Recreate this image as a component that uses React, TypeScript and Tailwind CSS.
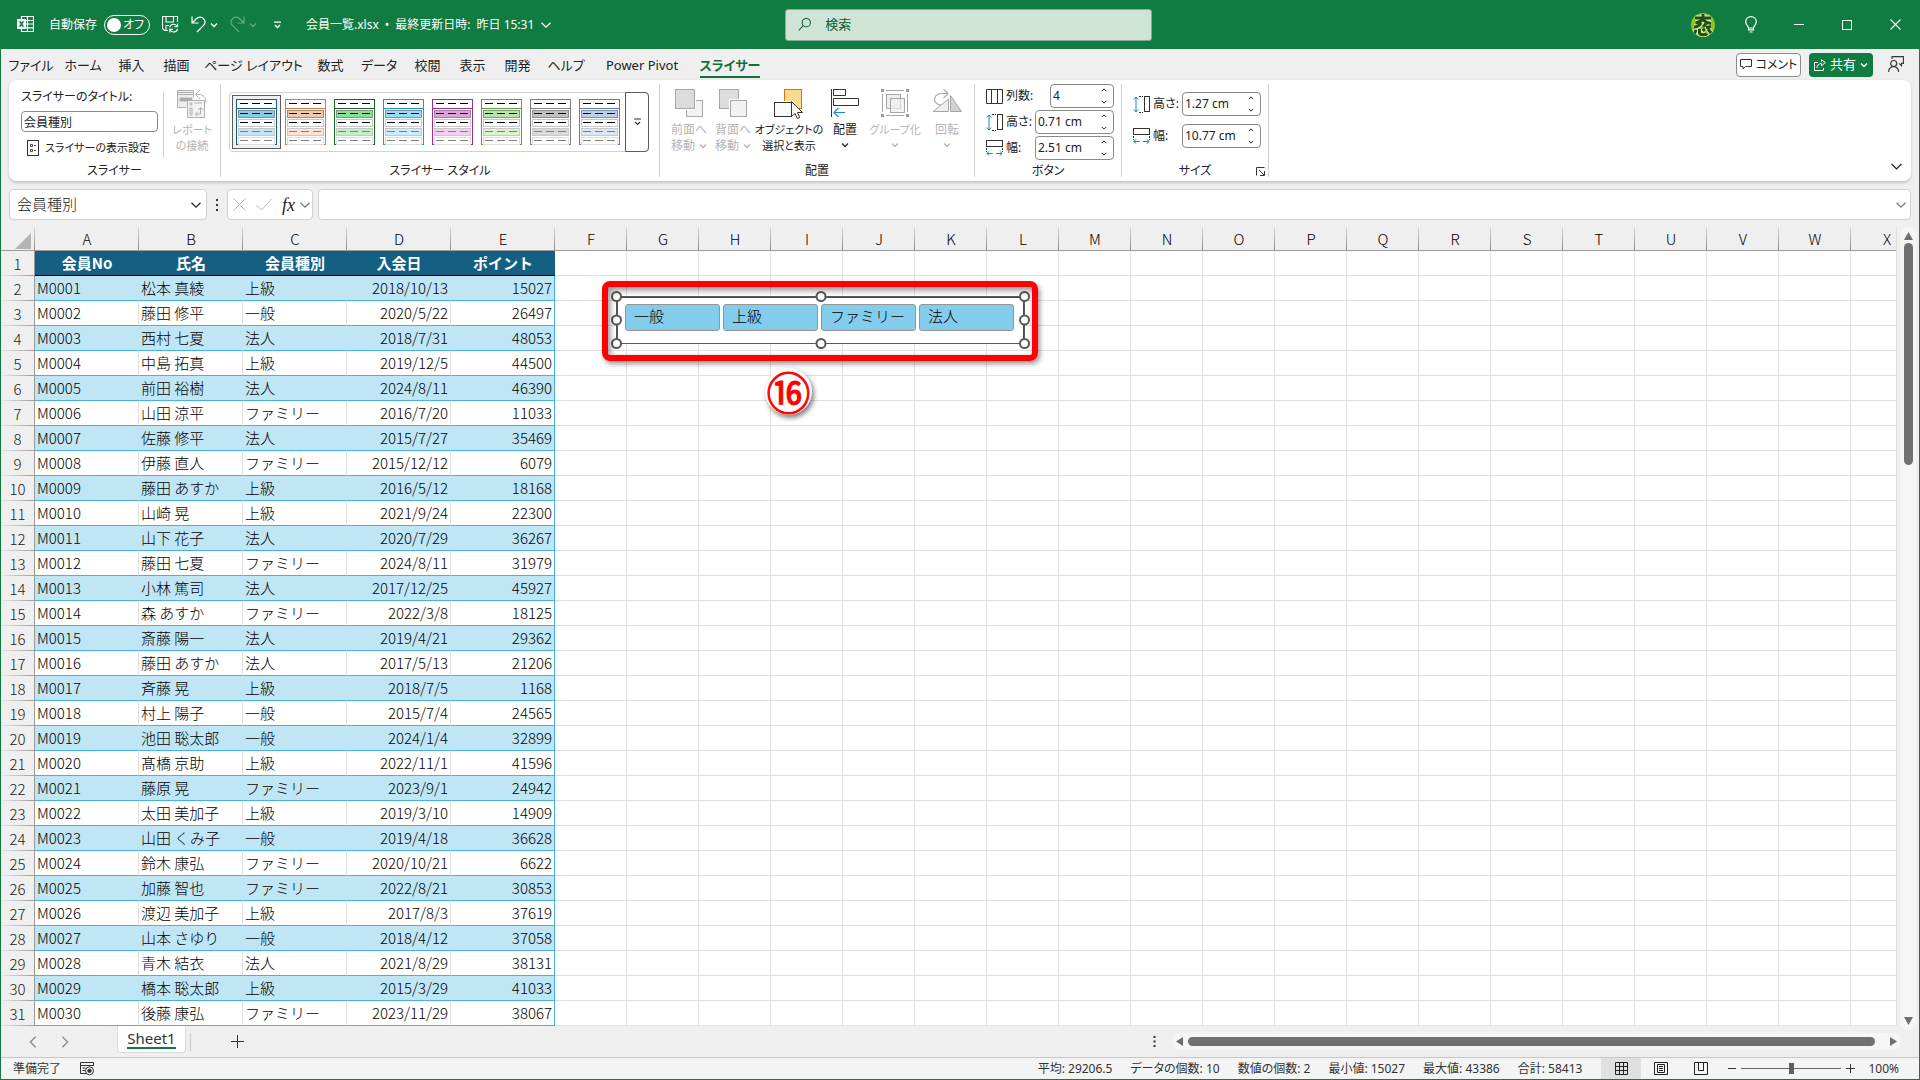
import type { ReactNode } from "react";
import { clsx } from "clsx";

type Member = [string, string, string, string, string];

const MEMBERS: Member[] = [
  ["M0001", "松本 真綾", "上級", "2018/10/13", "15027"],
  ["M0002", "藤田 修平", "一般", "2020/5/22", "26497"],
  ["M0003", "西村 七夏", "法人", "2018/7/31", "48053"],
  ["M0004", "中島 拓真", "上級", "2019/12/5", "44500"],
  ["M0005", "前田 裕樹", "法人", "2024/8/11", "46390"],
  ["M0006", "山田 涼平", "ファミリー", "2016/7/20", "11033"],
  ["M0007", "佐藤 修平", "法人", "2015/7/27", "35469"],
  ["M0008", "伊藤 直人", "ファミリー", "2015/12/12", "6079"],
  ["M0009", "藤田 あすか", "上級", "2016/5/12", "18168"],
  ["M0010", "山崎 晃", "上級", "2021/9/24", "22300"],
  ["M0011", "山下 花子", "法人", "2020/7/29", "36267"],
  ["M0012", "藤田 七夏", "ファミリー", "2024/8/11", "31979"],
  ["M0013", "小林 篤司", "法人", "2017/12/25", "45927"],
  ["M0014", "森 あすか", "ファミリー", "2022/3/8", "18125"],
  ["M0015", "斎藤 陽一", "法人", "2019/4/21", "29362"],
  ["M0016", "藤田 あすか", "法人", "2017/5/13", "21206"],
  ["M0017", "斉藤 晃", "上級", "2018/7/5", "1168"],
  ["M0018", "村上 陽子", "一般", "2015/7/4", "24565"],
  ["M0019", "池田 聡太郎", "一般", "2024/1/4", "32899"],
  ["M0020", "髙橋 京助", "上級", "2022/11/1", "41596"],
  ["M0021", "藤原 晃", "ファミリー", "2023/9/1", "24942"],
  ["M0022", "太田 美加子", "上級", "2019/3/10", "14909"],
  ["M0023", "山田 くみ子", "一般", "2019/4/18", "36628"],
  ["M0024", "鈴木 康弘", "ファミリー", "2020/10/21", "6622"],
  ["M0025", "加藤 智也", "ファミリー", "2022/8/21", "30853"],
  ["M0026", "渡辺 美加子", "上級", "2017/8/3", "37619"],
  ["M0027", "山本 さゆり", "一般", "2018/4/12", "37058"],
  ["M0028", "青木 結衣", "法人", "2021/8/29", "38131"],
  ["M0029", "橋本 聡太郎", "上級", "2015/3/29", "41033"],
  ["M0030", "後藤 康弘", "ファミリー", "2023/11/29", "38067"],
];

const HEADERS = ["会員No", "氏名", "会員種別", "入会日", "ポイント"];
const DATA_COLS = ["A", "B", "C", "D", "E"];
const EMPTY_COLS = "FGHIJKLMNOPQRSTUVWX".split("");

const TABS = [
  { label: "ファイル", width: "w-[52px]" },
  { label: "ホーム", width: "w-[52px]" },
  { label: "挿入", width: "w-[45px]" },
  { label: "描画", width: "w-[45px]" },
  { label: "ページ レイアウト", width: "w-[109px]" },
  { label: "数式", width: "w-[45px]" },
  { label: "データ", width: "w-[52px]" },
  { label: "校閲", width: "w-[45px]" },
  { label: "表示", width: "w-[45px]" },
  { label: "開発", width: "w-[45px]" },
  { label: "ヘルプ", width: "w-[52px]" },
  { label: "Power Pivot", width: "w-[100px]" },
  { label: "スライサー", width: "w-[76px]" },
];

const STYLES = [
  { name: "青緑", line: "#156082", strong: "#83cceb", soft: "#c0e6f5" },
  { name: "オレンジ", line: "#e97132", strong: "#f7c7ac", soft: "#fbe2d5" },
  { name: "緑", line: "#196b24", strong: "#84e291", soft: "#c1f0c8" },
  { name: "水色", line: "#0f9ed5", strong: "#94dcf8", soft: "#caedfb" },
  { name: "紫", line: "#a02b93", strong: "#e49edd", soft: "#f2ceef" },
  { name: "黄緑", line: "#4ea72e", strong: "#b5e6a2", soft: "#daf2d0" },
  { name: "灰色", line: "#7f7f7f", strong: "#bfbfbf", soft: "#d9d9d9" },
  { name: "青", line: "#4f81bd", strong: "#b8d0ea", soft: "#dce6f5" },
];

const STATS = ["平均: 29206.5", "データの個数: 10", "数値の個数: 2", "最小値: 15027", "最大値: 43386", "合計: 58413"];

function Chevron({ size = 8, className }: { size?: number; className?: string }) {
  return (
    <svg width={size} height={size} viewBox="0 0 8 8" fill="none" stroke="currentColor" strokeWidth={size > 8 ? 0.8 : 1.3} className={className}>
      <path d="M1 2.5 4 5.5 7 2.5" />
    </svg>
  );
}

/* ---------- title bar ---------- */

function ExcelIcon() {
  return (
    <svg width="17" height="17" viewBox="0 0 17 17" fill="none" stroke="white">
      <path d="M4.5 3V.5h12v15h-12V13M10.5.5v15M4.5 4.5h12M9 8h7.5M4.5 11.8h12" strokeWidth="1.2" />
      <path d="M0 3h9v10H0z" fill="white" stroke="none" />
      <path d="m2.6 5.3 3.8 5.4M6.4 5.3l-3.8 5.4" stroke="#107c41" strokeWidth="1.5" />
    </svg>
  );
}

function TitleBar() {
  return (
    <header className="grid h-[49px] shrink-0 grid-cols-[minmax(0,1fr)_367px_minmax(0,1fr)] items-center bg-[#107c41] pl-4 text-xs text-white">
      <div className="flex items-center">
        <ExcelIcon />
        <label className="ml-[15px] flex items-center gap-[7px]">
          自動保存
          <input type="checkbox" role="switch" className="peer sr-only" />
          <span className="flex h-5 w-[46px] items-center justify-between rounded-full border border-white pr-[5px] pl-0.5">
            <span className="size-3.5 rounded-full bg-white" />
            オフ
          </span>
        </label>
        <button aria-label="上書き保存" className="ml-3">
          <svg width="17" height="17" viewBox="0 0 17 17" fill="none" stroke="white" strokeWidth="1.1">
            <path d="M6 14.5H2.5l-2-2V.5h15V6M4 .5V6h7.5V.5M4 14V9.5h3" />
            <path d="M7.7 11.3a4 4 0 0 1 7.5-.8M15.6 7.6v3.2h-3.2M15.6 12.8a4 4 0 0 1-7.5.9M7.8 16.6v-3.2H11" />
          </svg>
        </button>
        <button aria-label="元に戻す" className="ml-3 flex items-center gap-1">
          <svg width="15" height="17" viewBox="0 0 15 17" fill="none" stroke="white" strokeWidth="1.2">
            <path d="M1 .5V7h6.5M1 7l4-4c2.5-2.5 6-2.3 7.7-.2 1.7 2 1.5 4.8-.2 6.6L6 16" />
          </svg>
          <Chevron />
        </button>
        <button aria-label="やり直し" disabled className="ml-3 flex items-center gap-1 opacity-35">
          <svg width="15" height="17" viewBox="0 0 15 17" fill="none" stroke="white" strokeWidth="1.2">
            <path d="M14 .5V7H7.5M14 7l-4-4C7.5.5 4 .7 2.300 2.8.6 4.800.8 7.600 2.500 9.400L9 16" />
          </svg>
          <Chevron />
        </button>
        <button aria-label="クイック アクセス ツール バーのユーザー設定" className="ml-4">
          <svg width="9" height="8" viewBox="0 0 9 8" fill="none" stroke="white" strokeWidth="1.3">
            <path d="M1 1.2h7M2 4l2.500 2.500L7 4" />
          </svg>
        </button>
        <button className="ml-6 flex items-center gap-1.5 whitespace-nowrap">
          <span>会員一覧.xlsx</span>
          <span>•</span>
          <span>最終更新日時:</span>
          <span>昨日 15:31</span>
          <Chevron size={12} />
        </button>
      </div>

      <label className="flex h-8 items-center gap-3.5 rounded-[3px] border border-[#8aa896] bg-[#cfe3d7] pl-3 text-[#0b5a2f]">
        <svg width="15" height="15" viewBox="0 0 15 15" fill="none" stroke="currentColor" strokeWidth="1.1">
          <circle cx="9" cy="5.5" r="4.5" />
          <path d="M5.8 8.8.7 14" />
        </svg>
        <input type="search" aria-label="検索" placeholder="検索" className="w-full bg-transparent text-[13px] outline-none placeholder:text-[#0b5a2f]" />
      </label>

      <div className="flex items-center justify-end">
        <button aria-label="アカウント" className="flex w-12 justify-center">
          <svg width="24" height="24" viewBox="0 0 24 24">
            <clipPath id="avatar-clip"><circle cx="12" cy="12" r="12" /></clipPath>
            <g clipPath="url(#avatar-clip)" fill="none">
              <path d="M0 0h24v24H0z" fill="#8fc31f" />
              <path
                d="M4 5h16M12 1v5M4.500 10c3-.5 6-2 7.500-4 1.500 2.500 4.500 4 8 4.500M3 14c4 0 5.500-1.500 7-4M12 14l4-4.500M15 14.500l5-1M5 17l-1.500 3.500M8.500 16v4c0 2 6.500 2.500 7.500.5M12 15.500l1.500 2.500M17 16l3 4"
                stroke="#dcebb5" strokeWidth="5"
              />
              <path
                d="M4 5h16M12 1v5M4.500 10c3-.5 6-2 7.500-4 1.500 2.500 4.500 4 8 4.500M3 14c4 0 5.500-1.500 7-4M12 14l4-4.500M15 14.500l5-1M5 17l-1.500 3.500M8.500 16v4c0 2 6.500 2.500 7.500.5M12 15.500l1.500 2.500M17 16l3 4"
                stroke="#234f12" strokeWidth="3"
              />
            </g>
          </svg>
        </button>
        <button aria-label="ヒント" className="flex w-12 justify-center">
          <svg width="12" height="17" viewBox="0 0 12 17" fill="none" stroke="white" strokeWidth="1.2">
            <path d="M3.500 12c0-2-2.800-3-2.800-6.200C.7 2.800 3 .7 6 .7s5.300 2.100 5.300 5.100C11.300 9 8.500 10 8.500 12zM3.500 12v1.800h5V12M4.500 16h3" />
          </svg>
        </button>
        <button aria-label="最小化" className="flex w-12 justify-center">
          <svg width="10" height="10" viewBox="0 0 10 10" stroke="white"><path d="M0 4.5h10" /></svg>
        </button>
        <button aria-label="最大化" className="flex w-12 justify-center">
          <svg width="10" height="10" viewBox="0 0 10 10" fill="none" stroke="white"><rect x=".5" y=".5" width="9" height="9" /></svg>
        </button>
        <button aria-label="閉じる" className="flex w-12 justify-center">
          <svg width="11" height="11" viewBox="0 0 11 11" stroke="white" strokeWidth="1.1"><path d="m.5.5 10 10M10.500.5l-10 10" /></svg>
        </button>
      </div>
    </header>
  );
}

/* ---------- ribbon ---------- */

function TabRow() {
  return (
    <nav className="flex h-[31px] shrink-0 items-center pl-1 text-[13px]">
      {TABS.map(({ label, width }) => {
        const active = label === "スライサー";
        return (
          <button key={label} className={clsx("flex justify-center whitespace-nowrap", width)}>
            <span className={clsx("border-y-2 border-transparent leading-[22px]", active && "border-b-[#0f703b] font-bold text-[#0f703b]")}>
              {label}
            </span>
          </button>
        );
      })}
      <div className="ml-auto flex items-center pr-[15px]">
        <button className="flex h-6 w-[65px] items-center justify-center gap-1 rounded-[4px] border border-[#8a8a8a] bg-white text-xs whitespace-nowrap">
          <svg width="12" height="11" viewBox="0 0 12 11" fill="none" stroke="#333">
            <path d="M.5.5h11v7H5.500L3 10V7.500H.5z" />
          </svg>
          コメント
        </button>
        <button className="ml-2 flex h-6 w-16 items-center justify-center gap-1 rounded-[4px] bg-[#107c41] text-white">
          <svg width="12" height="12" viewBox="0 0 12 12" fill="none" stroke="white">
            <path d="M4 3.500H.5v8h9V9M3 9c0-3 2-4.500 4.500-4.500V6.800L11.300 3.500 7.500.8v2" />
          </svg>
          共有
          <Chevron />
        </button>
        <button aria-label="フィードバック" className="ml-[15px]">
          <svg width="16" height="17" viewBox="0 0 16 17" fill="none" stroke="#333" strokeWidth="1.1">
            <path d="M4 3V.6h11.400v6.800H13.500v2.400L11 7.400" />
            <circle cx="5.7" cy="7.5" r="3" />
            <path d="M.6 16c0-3.500 2-5.300 5-5.300s5 1.800 5 5.300" />
          </svg>
        </button>
      </div>
    </nav>
  );
}

function Group({ label, width, children, launcher }: { label: string; width: string; children: ReactNode; launcher?: boolean }) {
  return (
    <section className={clsx("my-1 flex shrink-0 flex-col border-r border-[#d1d1d1]", width)}>
      <div className="flex h-[81px] shrink-0">{children}</div>
      <div className="grid h-3 grid-cols-[18px_1fr_18px] items-center text-center leading-3">
        <span />
        {label}
        {launcher && (
          <button aria-label="サイズとプロパティ" className="mr-[3px] justify-self-end">
            <svg width="9" height="9" viewBox="0 0 9 9" fill="none" stroke="#333">
              <path d="M.5 8.500v-8h8M8.500 4v4.500H4M3 3l5 5" />
            </svg>
          </button>
        )}
      </div>
    </section>
  );
}

function StyleThumb({ line, strong, soft }: { line: string; strong: string; soft: string }) {
  const rows = [
    { y: 11.5, fill: strong, border: "#8f8f8f", dash: "#000" },
    { y: 20.5, fill: "#fff", border: "#c8c8c8", dash: "#000" },
    { y: 29.5, fill: soft, border: "#c8c8c8", dash: "#7f7f7f" },
    { y: 38.5, fill: "#fff", border: "#dedede", dash: "#7f7f7f" },
  ];
  return (
    <svg width="41" height="46" viewBox="0 0 41 46" fill="none">
      <rect x=".5" y=".5" width="40" height="45" fill="#fff" stroke={line} />
      <path d="M0 9.5h41" stroke={line} />
      <path d="M4 4.5h32" stroke="#000" strokeDasharray="8 4" />
      {rows.map((r) => (
        <g key={r.y}>
          <rect x="2.5" y={r.y} width="36" height="7" fill={r.fill} stroke={r.border} />
          <path d={`M4 ${r.y + 3}h32`} stroke={r.dash} strokeDasharray="8 4" />
        </g>
      ))}
    </svg>
  );
}

type BigButtonProps = {
  lines: string[];
  icon: ReactNode;
  width: string;
  disabled?: boolean;
  compact?: boolean;
  caret?: "inline" | "below";
};

function BigButton({ lines, icon, width, disabled, compact, caret }: BigButtonProps) {
  return (
    <button
      disabled={disabled}
      className={clsx("flex shrink-0 flex-col items-center pt-[5px] leading-4 whitespace-nowrap", width, compact && "text-[11px]", disabled && "text-[#b4b4b4]")}
    >
      <span className="mb-1 flex h-[29px] items-start">{icon}</span>
      {lines.map((l, i) => (
        <span key={l} className="flex items-center gap-1 leading-4">
          {l}
          {caret === "inline" && i === lines.length - 1 && <Chevron />}
        </span>
      ))}
      {caret === "below" && <Chevron className="mt-[3px]" />}
    </button>
  );
}

function HeightIcon() {
  return (
    <svg width="17" height="17" viewBox="0 0 17 17" fill="none">
      <path d="M3 1v15M.8 3.500 3 1l2.200 2.500M.8 13.500 3 16l2.200-2.500" stroke="#1f87d1" />
      <path d="M6 .5h4M6 16.500h4" stroke="#333" strokeDasharray="2 1" />
      <rect x="11.5" y=".5" width="5" height="15" stroke="#333" />
    </svg>
  );
}

function WidthIcon() {
  return (
    <svg width="17" height="17" viewBox="0 0 17 17" fill="none">
      <rect x=".5" y=".5" width="16" height="6" stroke="#333" />
      <path d="M.5 8v4M16.500 8v4" stroke="#333" strokeDasharray="2 1" />
      <path d="M.8 13.500h6M10 13.500h6M3.300 11.300.8 13.500l2.500 2.200M13.700 11.300l2.500 2.200-2.500 2.200" stroke="#1f87d1" />
    </svg>
  );
}

function ColumnsIcon() {
  return (
    <svg width="17" height="15" viewBox="0 0 17 15" fill="none" stroke="#333">
      <path d="M.5.5h16v14H.5zM5.500.5v14M11.500.5v14" />
    </svg>
  );
}

function SpinField({ id, label, value, icon, narrow }: { id: string; label: string; value: string; icon: ReactNode; narrow?: boolean }) {
  return (
    <div className="flex h-6 items-center">
      {icon}
      <label htmlFor={id} className="ml-[3px] whitespace-nowrap">{label}</label>
      <span className={clsx("ml-auto flex h-6 items-center rounded-[4px] border border-[#8a8a8a] bg-white pr-1.5", narrow ? "w-16" : "w-[79px]")}>
        <input id={id} defaultValue={value} className="w-full min-w-0 bg-transparent pl-0.5 outline-none" />
        <span className="flex flex-col gap-1.5">
          <button aria-label={`${label} 増やす`}><Chevron size={6} className="rotate-180" /></button>
          <button aria-label={`${label} 減らす`}><Chevron size={6} /></button>
        </span>
      </span>
    </div>
  );
}

function Ribbon() {
  return (
    <div className="mx-2 flex h-[102px] shrink-0 rounded-lg border-b border-[#cfcfcf] bg-white text-xs shadow-[0_1px_3px_rgba(0,0,0,0.18)]">
      <Group label="スライサー" width="w-[212px]">
        <div className="my-[7px] flex flex-1 border-r border-[#d1d1d1] pl-3">
          <div className="flex flex-col">
            <label htmlFor="slicer-title" className="leading-3">スライサーのタイトル:</label>
            <input id="slicer-title" defaultValue="会員種別" className="mt-2 h-[21px] w-[137px] rounded-[4px] border border-[#8a8a8a] px-0.5 outline-none" />
            <button className="mt-2 flex items-center gap-1.5 pl-1.5 text-[11px] whitespace-nowrap">
              <svg width="12" height="16" viewBox="0 0 12 16" fill="none" stroke="#333">
                <rect x=".5" y=".5" width="11" height="15" />
                <path d="M3.500 4.500h2v2h-2zM3.500 9.500h2v2h-2zM7 5.500h2M7 10.500h2" strokeWidth=".9" />
              </svg>
              スライサーの表示設定
            </button>
          </div>
        </div>
        <BigButton
          disabled
          compact
          width="w-14"
          lines={["レポート", "の接続"]}
          icon={
            <svg width="32" height="30" viewBox="0 0 32 30" fill="none" stroke="#b0b0b0">
              <path d="M10 18.500H1.500v-17h16v7" fill="#eee" />
              <path d="M1.500 5.500h16M1.500 3.500h16" />
              <path d="M4 9h12v3H4z" fill="#aaa" />
              <rect x="11.5" y="11.5" width="17" height="17" fill="#f2f2f2" />
              <path d="M14 14h2v2h-2zM18.500 14H26M14 19h2v7h-2z" />
              <path d="M20 25h4.500v-6M22 21l2.500-2.500L27 21M21.500 23 19.500 25l2 2M24 1l-4.500 4.500L24 10M20 5.500h3c4 0 7 2.500 7 8" />
            </svg>
          }
        />
      </Group>

      <Group label="スライサー スタイル" width="w-[439px]">
        <div className="mt-2 ml-2 flex h-[60px] w-[420px] rounded-[4px] border border-[#d1d1d1]">
          <div className="flex flex-1 items-center pl-0.5">
            {STYLES.map((s, i) => (
              <button
                key={s.name}
                aria-label={`スライサー スタイル ${s.name}`}
                className={clsx("flex h-[54px] w-[49px] items-center justify-center border", i === 0 ? "border-[#5c5c5c] bg-[#f0f0f0]" : "border-transparent")}
              >
                <StyleThumb line={s.line} strong={s.strong} soft={s.soft} />
              </button>
            ))}
          </div>
          <button aria-label="その他のスタイル" className="-my-px -mr-px flex w-6 items-center justify-center rounded-r-[4px] border border-[#5c5c5c]">
            <svg width="9" height="8" viewBox="0 0 9 8" fill="none" stroke="#333" strokeWidth="1.2">
              <path d="M1 1h7M2 4l2.500 2.500L7 4" />
            </svg>
          </button>
        </div>
      </Group>

      <Group label="配置" width="w-[315px]">
        <div className="flex pl-[7px]">
          <BigButton disabled width="w-11" caret="inline" lines={["前面へ", "移動"]} icon={
            <svg width="28" height="28" viewBox="0 0 28 28" stroke="#a6a6a6">
              <rect x="11.5" y="11.5" width="16" height="16" fill="#f2f2f2" />
              <path d="M0 0h21v21H0z" fill="#fff" stroke="none" />
              <rect x=".5" y=".5" width="19" height="19" fill="#dcdcdc" />
            </svg>
          } />
          <BigButton disabled width="w-11" caret="inline" lines={["背面へ", "移動"]} icon={
            <svg width="28" height="28" viewBox="0 0 28 28" stroke="#a6a6a6">
              <rect x=".5" y=".5" width="19" height="19" fill="#dcdcdc" />
              <path d="M10 10h18v18H10z" fill="#fff" stroke="none" />
              <rect x="11.5" y="11.5" width="16" height="16" fill="#f2f2f2" />
            </svg>
          } />
          <BigButton compact width="w-[68px]" lines={["オブジェクトの", "選択と表示"]} icon={
            <svg width="30" height="30" viewBox="0 0 30 30">
              <rect x="10.5" y=".5" width="17" height="19" fill="#f8db8f" stroke="#d87700" />
              <path d="M0 12h19v16H0z" fill="#fff" />
              <rect x=".5" y="13.5" width="17" height="14" fill="#fafafa" stroke="#333" />
              <path d="M17.500 12.500v15l3.500-3 2.300 5 2.400-1-2.200-5h5z" fill="#fff" stroke="#333" />
            </svg>
          } />
          <BigButton width="w-11" caret="below" lines={["配置"]} icon={
            <svg width="28" height="28" viewBox="0 0 28 28" fill="none" stroke="#333">
              <path d="M.5 0v28M2.500.5h12v6h-12zM2.500 9.500h25v7h-25z" />
              <path d="M14 23.500H3M7.500 19 3 23.500 7.500 28" stroke="#1f87d1" strokeWidth="1.2" />
            </svg>
          } />
          <BigButton disabled compact width="w-14" caret="below" lines={["グループ化"]} icon={
            <svg width="28" height="28" viewBox="0 0 28 28" fill="none" stroke="#a6a6a6">
              <path d="M5 1.500h18M5 26.500h18M1.500 5v18M26.500 5v18" />
              <rect x="5.5" y="5.5" width="14" height="14" fill="#eee" />
              <rect x="9.5" y="9.5" width="14" height="14" fill="#eee" fillOpacity=".7" />
              <path d="M0 0h3v3H0zM25 0h3v3h-3zM0 25h3v3H0zM25 25h3v3h-3z" fill="#9a9a9a" stroke="none" />
            </svg>
          } />
          <BigButton disabled width="w-12" caret="below" lines={["回転"]} icon={
            <svg width="30" height="28" viewBox="0 0 30 28" fill="none" stroke="#a6a6a6">
              <path d="M1 22.500h15.500V10z" fill="#eee" />
              <path d="M18.500 6.500v16h11z" fill="#d2d2d2" />
              <path d="M9 16c-5-.5-7.500-4-6-7.500C4 5.500 7 4.500 10 4.500h5M11.500 0 16 4.500 11.500 9" strokeWidth="1.1" />
            </svg>
          } />
        </div>
      </Group>

      <Group label="ボタン" width="w-[147px]">
        <div className="flex flex-1 flex-col gap-0.5 pr-[7px] pl-[11px]">
          <SpinField id="btn-cols" label="列数:" value="4" icon={<ColumnsIcon />} narrow />
          <SpinField id="btn-height" label="高さ:" value="0.71 cm" icon={<HeightIcon />} />
          <SpinField id="btn-width" label="幅:" value="2.51 cm" icon={<WidthIcon />} />
        </div>
      </Group>

      <Group label="サイズ" width="w-[147px]" launcher>
        <div className="flex flex-1 flex-col gap-2 pt-2 pr-[7px] pl-[11px]">
          <SpinField id="size-height" label="高さ:" value="1.27 cm" icon={<HeightIcon />} />
          <SpinField id="size-width" label="幅:" value="10.77 cm" icon={<WidthIcon />} />
        </div>
      </Group>

      <button aria-label="リボンを折りたたむ" className="mt-auto mr-2 mb-2 ml-auto">
        <Chevron size={13} />
      </button>
    </div>
  );
}

/* ---------- formula bar ---------- */

function FormulaBar() {
  return (
    <div className="mx-2 mt-[7px] flex h-[31px] shrink-0 font-['Noto_Sans_CJK_JP',sans-serif]">
      <div className="flex w-[198px] items-center rounded-[4px] border border-[#d1d1d1] bg-white pr-1 pl-[7px] text-[15px]">
        <input aria-label="名前ボックス" defaultValue="会員種別" className="w-full min-w-0 bg-transparent font-light text-[#222] outline-none" />
        <button aria-label="名前の一覧"><Chevron size={12} /></button>
      </div>
      <svg width="20" height="31" viewBox="0 0 20 31" fill="#333">
        <path d="M9 10h2v2H9zM9 15h2v2H9zM9 20h2v2H9z" />
      </svg>
      <div className="flex w-[86px] items-center rounded-[4px] border border-[#d1d1d1] bg-white pl-[5px] text-[#b8b8b8]">
        <button aria-label="キャンセル" disabled>
          <svg width="13" height="13" viewBox="0 0 13 13" stroke="currentColor"><path d="m.5.5 12 12M12.500.5l-12 12" /></svg>
        </button>
        <button aria-label="入力" disabled className="ml-2.5">
          <svg width="16" height="13" viewBox="0 0 16 13" fill="none" stroke="currentColor"><path d="m.5 7 5 5 10-11" /></svg>
        </button>
        <button aria-label="関数の挿入" className="ml-2.5 font-['Liberation_Serif',serif] text-lg leading-5 text-[#222] italic">fx</button>
        <button aria-label="関数の一覧" className="ml-1"><Chevron size={12} className="text-[#777]" /></button>
      </div>
      <div className="ml-[5px] flex flex-1 items-center rounded-[4px] border border-[#d1d1d1] bg-white pr-[3px]">
        <input aria-label="数式バー" className="h-full w-full bg-transparent px-1 outline-none" />
        <button aria-label="数式バーの展開"><Chevron size={12} className="text-[#777]" /></button>
      </div>
    </div>
  );
}

/* ---------- sheet ---------- */

const COL_HEAD =
  "h-6 border-b border-[#9b9b9b] bg-[linear-gradient(to_bottom,#dcdcdc,#8f8f8f)] bg-[length:1px_100%] bg-right bg-no-repeat p-0 text-center font-light leading-[22px]";
const ROW_HEAD =
  "h-[25px] border-r border-[#9b9b9b] bg-[linear-gradient(to_right,#e4e4e4,#a0a0a0)] bg-[length:100%_1px] bg-bottom bg-no-repeat p-0 text-center font-light text-[#222]";

function EmptyCells() {
  return EMPTY_COLS.map((c) => <td key={c} className="border-r border-b border-[#e0e0e0] bg-white" />);
}

function Sheet() {
  return (
    <table className="w-0 table-fixed border-separate border-spacing-0 text-[15px] leading-[22px] font-light text-black">
      <colgroup>
        <col className="w-[34px]" />
        {DATA_COLS.map((c) => <col key={c} className="w-[104px]" />)}
        {EMPTY_COLS.map((c) => <col key={c} className="w-[72px]" />)}
      </colgroup>
      <thead>
        <tr>
          <th className={COL_HEAD}>
            <svg width="16" height="16" viewBox="0 0 16 16" className="mt-1 ml-[14px] block"><path d="M16 0v16H0z" fill="#b4b4b4" /></svg>
          </th>
          {[...DATA_COLS, ...EMPTY_COLS].map((c) => <th key={c} scope="col" className={COL_HEAD}>{c}</th>)}
        </tr>
      </thead>
      <tbody>
        <tr>
          <th scope="row" className={ROW_HEAD}>1</th>
          {HEADERS.map((h) => (
            <td key={h} className="border-b border-black bg-[#156082] p-0 text-center font-bold text-white">{h}</td>
          ))}
          <EmptyCells />
        </tr>
        {MEMBERS.map((m, i) => {
          const banded = i % 2 === 0;
          return (
            <tr key={m[0]}>
              <th scope="row" className={ROW_HEAD}>{i + 2}</th>
              {m.map((v, c) => (
                <td
                  key={c}
                  className={clsx(
                    "border-r border-b border-b-[#44b3e1] p-0 whitespace-nowrap",
                    banded ? "bg-[#c0e6f5]" : "bg-white",
                    c === 4 ? "border-r-[#44b3e1]" : banded ? "border-r-[#c0e6f5]" : "border-r-[#e0e0e0]",
                    c > 2 ? "pr-0.5 text-right" : "pl-0.5",
                  )}
                >
                  {v}
                </td>
              ))}
              <EmptyCells />
            </tr>
          );
        })}
      </tbody>
    </table>
  );
}

const HANDLES = [
  "-top-1.5 -left-1.5",
  "-top-1.5 left-1/2 -translate-x-1/2",
  "-top-1.5 -right-1.5",
  "top-1/2 -left-1.5 -translate-y-1/2",
  "top-1/2 -right-1.5 -translate-y-1/2",
  "-bottom-1.5 -left-1.5",
  "-bottom-1.5 left-1/2 -translate-x-1/2",
  "-bottom-1.5 -right-1.5",
];

function Slicer() {
  return (
    <div className="absolute top-[69px] left-[615px] h-[48px] w-[409px] border border-[#595959] bg-white shadow-[inset_0_1px_0_#156082,inset_1px_0_0_#156082,inset_-1px_0_0_#156082]">
      <div className="flex gap-[3px] px-2 pt-[7px]">
        {["一般", "上級", "ファミリー", "法人"].map((name) => (
          <button key={name} className="h-[27px] w-[95px] rounded-[3px] border border-[#959595] bg-[#83cceb] pb-1 pl-2 text-left text-[15px] leading-[21px] font-light text-black">
            {name}
          </button>
        ))}
      </div>
      {HANDLES.map((pos) => (
        <span key={pos} className={clsx("absolute size-[11px] rounded-full border-2 border-[#595959] bg-white", pos)} />
      ))}
    </div>
  );
}

function Annotations() {
  return (
    <>
      <div className="pointer-events-none absolute top-[54px] left-[601px] h-[80px] w-[436px] rounded-lg border-[6px] border-[#fe0000] shadow-[2px_3px_5px_rgba(0,0,0,0.4),inset_2px_3px_6px_rgba(0,0,0,0.45)]" />
      <div className="absolute top-[141px] left-[764px] flex size-[47px] items-center justify-center rounded-full bg-white pb-0.5 text-[44px] leading-none font-normal text-[#fe0000] shadow-[2px_3px_5px_rgba(0,0,0,0.5)] [-webkit-text-stroke:1px_#fe0000]">
        ⑯
      </div>
    </>
  );
}

function VerticalScrollbar() {
  return (
    <div className="-mb-1 ml-[3px] mr-[3px] flex w-4 shrink-0 flex-col items-center rounded-full bg-[#f6f6f6] py-[5px]">
      <svg width="9" height="8" viewBox="0 0 9 8" fill="#6e6e6e"><path d="M4.500 0 9 8H0z" /></svg>
      <div className="mt-[3px] h-[222px] w-[9px] rounded-full bg-[#707070]" />
      <svg width="9" height="8" viewBox="0 0 9 8" fill="#6e6e6e" className="mt-auto"><path d="M4.500 8 9 0H0z" /></svg>
    </div>
  );
}

/* ---------- bottom bars ---------- */

function SheetTabs() {
  return (
    <div className="flex h-[31px] shrink-0 items-center text-[#333]">
      <button aria-label="前のシート" className="ml-[25px]"><Chevron size={14} className="rotate-90 text-[#8c8c8c]" /></button>
      <button aria-label="次のシート" className="ml-[18px]"><Chevron size={14} className="-rotate-90 text-[#8c8c8c]" /></button>
      <button className="-mt-1 ml-[45px] flex h-[27px] w-[69px] justify-center rounded-b-[4px] border-x border-b border-[#dadada] bg-white text-[15px]">
        <span className="h-[23px] border-b-2 border-[#107c41] leading-6">Sheet1</span>
      </button>
      <span className="ml-1 h-[18px] border-l border-[#c8c8c8]" />
      <button aria-label="新しいシート" className="ml-10">
        <svg width="13" height="13" viewBox="0 0 13 13" stroke="#333"><path d="M6.500 0v13M0 6.500h13" /></svg>
      </button>
      <svg width="3" height="13" viewBox="0 0 3 13" fill="#333" className="ml-auto">
        <path d="M.5 1h2v2h-2zM.5 5.500h2v2h-2zM.5 10h2v2h-2z" />
      </svg>
      <div className="mr-[18px] ml-4 flex h-[17px] w-[38%] items-center rounded-full bg-[#f6f6f6] px-1">
        <svg width="7" height="9" viewBox="0 0 7 9" fill="#6e6e6e"><path d="M7 0v9L0 4.500z" /></svg>
        <div className="mr-[15px] ml-[5px] h-[9px] flex-1 rounded-full bg-[#707070]" />
        <svg width="7" height="9" viewBox="0 0 7 9" fill="#6e6e6e"><path d="M0 0v9l7-4.500z" /></svg>
      </div>
    </div>
  );
}

function StatusBar() {
  return (
    <footer className="flex h-[22px] shrink-0 items-center border-t border-[#c6c6c6] bg-[#f4f4f4] pl-3 text-xs text-[#333]">
      準備完了
      <button aria-label="マクロの記録" className="ml-[19px]">
        <svg width="15" height="14" viewBox="0 0 15 14" fill="none" stroke="#333">
          <path d="M6 11.500H.5V.5h13V4M.5 3.500h13M2.500 6h3M2.500 8.500H5" />
          <circle cx="9.5" cy="8.8" r="4" />
          <circle cx="9.5" cy="8.8" r="1.7" fill="#333" />
        </svg>
      </button>
      <div className="ml-auto flex gap-[18px] pr-[19px] whitespace-nowrap">
        {STATS.map((s) => <span key={s}>{s}</span>)}
      </div>
      <button aria-label="標準" className="flex h-full w-10 items-center justify-center bg-[#e0e0e0]">
        <svg width="13" height="13" viewBox="0 0 13 13" fill="none" stroke="#222"><path d="M.5.5h12v12H.5zM4.500.5v12M8.500.5v12M.5 4.500h12M.5 8.500h12" /></svg>
      </button>
      <button aria-label="ページ レイアウト" className="flex h-full w-10 items-center justify-center">
        <svg width="14" height="13" viewBox="0 0 14 13" fill="none" stroke="#222"><path d="M.5.5h13v12H.5zM3.500 2.500h7v8h-7zM5 4.500h4M5 6.500h4M5 8.500h4" /></svg>
      </button>
      <button aria-label="改ページ プレビュー" className="flex h-full w-10 items-center justify-center">
        <svg width="14" height="13" viewBox="0 0 14 13" fill="none" stroke="#222"><path d="M.5.5h13v12H.5zM4.500.5v8h5v-8M9.500 8.500v-8" /></svg>
      </button>
      <button aria-label="縮小" className="ml-[7px]">
        <svg width="8" height="9" viewBox="0 0 8 9" stroke="#333"><path d="M0 4.500h8" /></svg>
      </button>
      <input
        type="range"
        aria-label="ズーム"
        min={0}
        max={100}
        defaultValue={50}
        className="mx-[5px] h-[11px] w-[100px] appearance-none bg-[linear-gradient(#666,#666)] bg-[length:100%_1px] bg-center bg-no-repeat [&::-webkit-slider-thumb]:h-[11px] [&::-webkit-slider-thumb]:w-[5px] [&::-webkit-slider-thumb]:appearance-none [&::-webkit-slider-thumb]:bg-[#5f5f5f]"
      />
      <button aria-label="拡大">
        <svg width="9" height="9" viewBox="0 0 9 9" stroke="#333"><path d="M0 4.500h9M4.500 0v9" /></svg>
      </button>
      <span className="mr-5 ml-[13px]">100%</span>
    </footer>
  );
}

export default function App() {
  return (
    <div className="flex h-screen flex-col overflow-hidden border-x border-b border-[#107c41] bg-[#efefef] font-['Noto_Sans','Noto_Sans_CJK_JP',sans-serif] text-[#222] [font-feature-settings:'palt']">
      <TitleBar />
      <TabRow />
      <Ribbon />
      <FormulaBar />
      <main className="mt-[7px] flex min-h-0 flex-1 font-['Noto_Sans_CJK_JP',sans-serif] [font-feature-settings:normal]">
        <div className="relative min-w-0 flex-1 overflow-hidden border-r border-[#e0e0e0]">
          <Sheet />
          <Slicer />
          <Annotations />
        </div>
        <VerticalScrollbar />
      </main>
      <SheetTabs />
      <StatusBar />
    </div>
  );
}
